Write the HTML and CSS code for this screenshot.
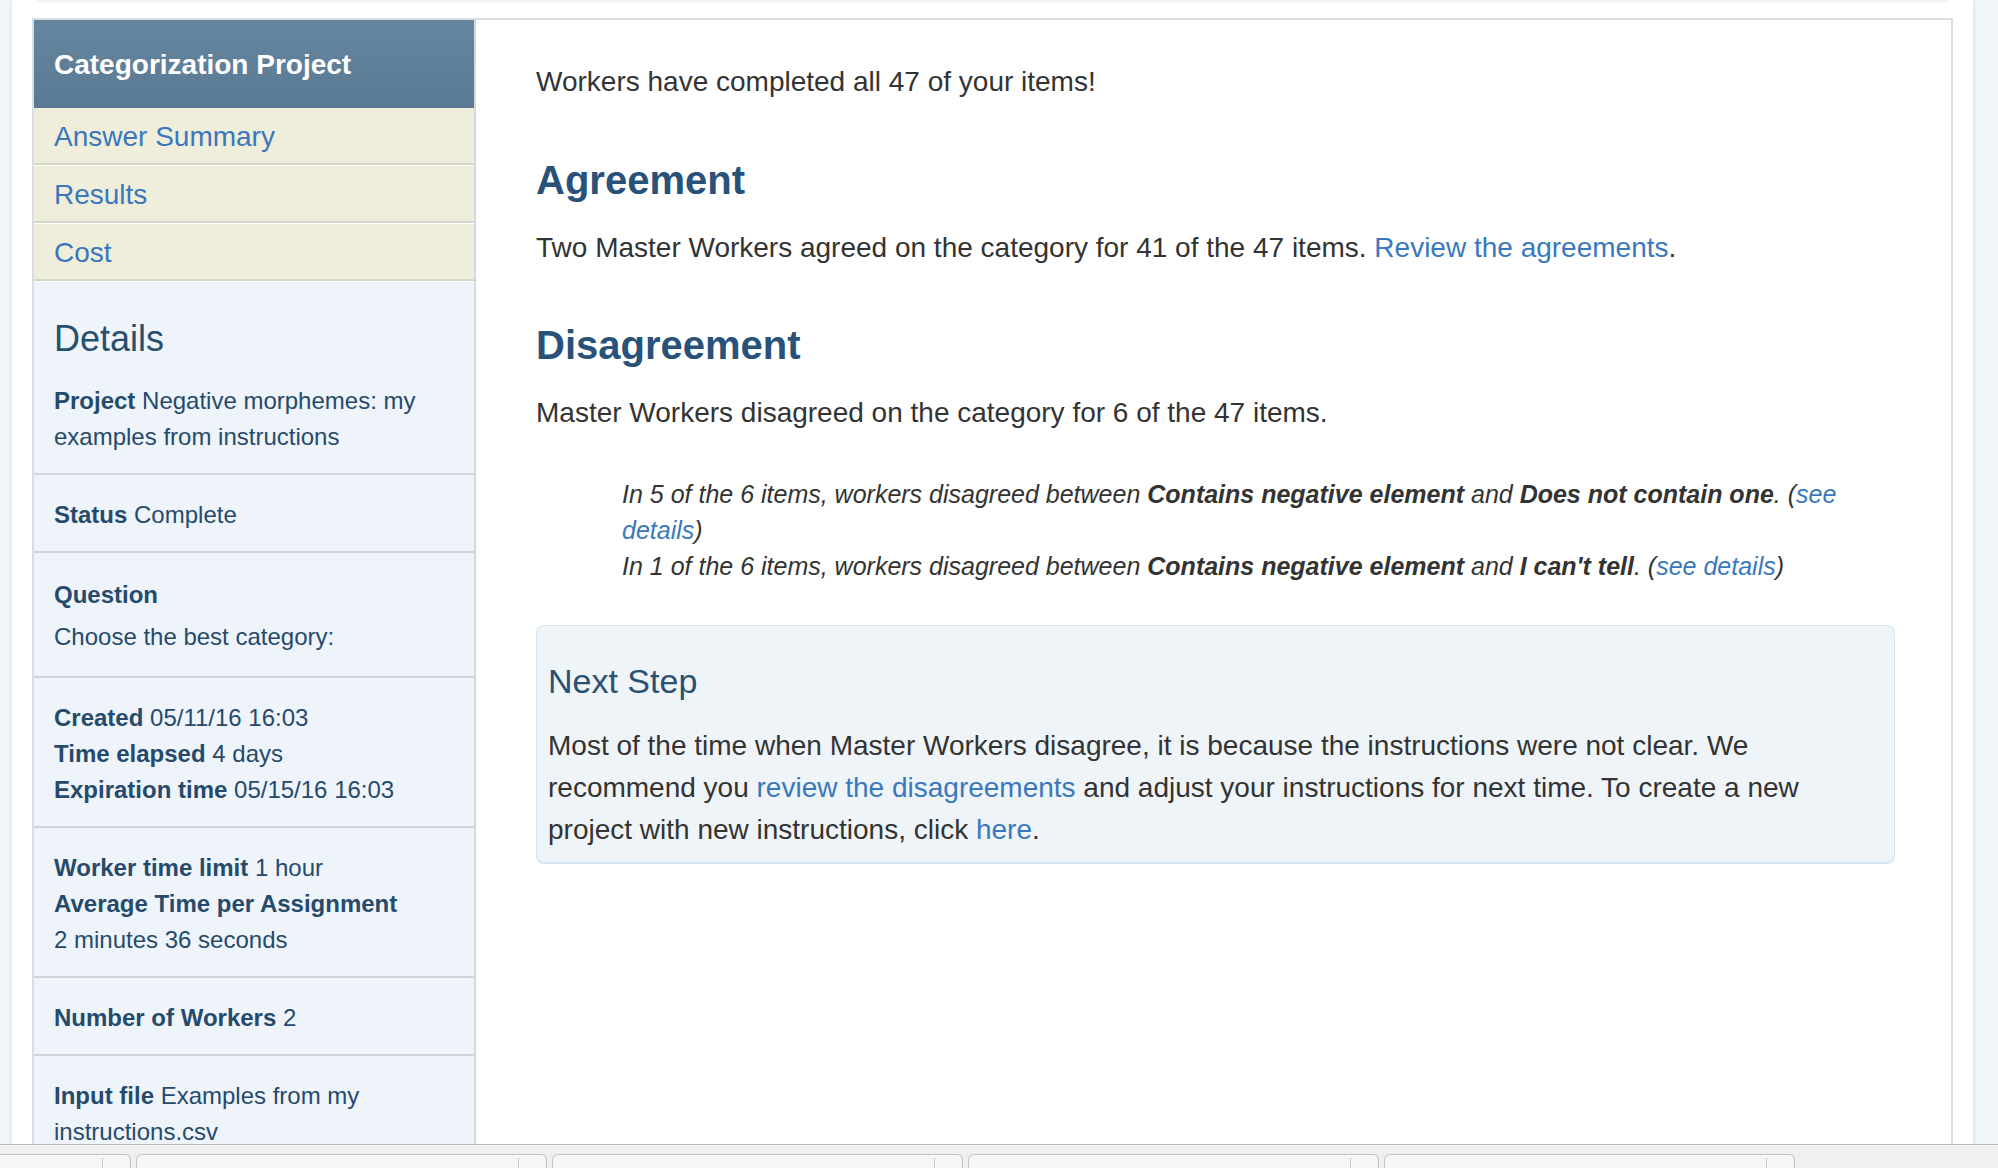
FILE: index.html
```html
<!DOCTYPE html>
<html lang="en">
<head>
<meta charset="utf-8">
<title>Categorization Project</title>
<link rel="stylesheet" href="styles.css">
</head>
<body>
<div class="page">
  <div class="topshade"></div>
  <div class="container">
    <aside class="sidebar">
      <div class="side-title">Categorization Project</div>
      <nav class="side-nav">
        <a class="nav-item first" href="#">Answer Summary</a>
        <a class="nav-item" href="#">Results</a>
        <a class="nav-item" href="#">Cost</a>
      </nav>
      <div class="details">
        <section class="d-sec d-first">
          <h2 class="d-title">Details</h2>
          <p class="d-line"><b>Project</b> Negative morphemes: my examples from instructions</p>
        </section>
        <section class="d-sec">
          <p class="d-line"><b>Status</b> Complete</p>
        </section>
        <section class="d-sec d-question">
          <p class="d-line q-label"><b>Question</b></p>
          <p class="d-line q-text">Choose the best category:</p>
        </section>
        <section class="d-sec">
          <p class="d-line"><b>Created</b> 05/11/16 16:03</p>
          <p class="d-line"><b>Time elapsed</b> 4 days</p>
          <p class="d-line"><b>Expiration time</b> 05/15/16 16:03</p>
        </section>
        <section class="d-sec">
          <p class="d-line"><b>Worker time limit</b> 1 hour</p>
          <p class="d-line"><b>Average Time per Assignment</b></p>
          <p class="d-line">2 minutes 36 seconds</p>
        </section>
        <section class="d-sec">
          <p class="d-line"><b>Number of Workers</b> 2</p>
        </section>
        <section class="d-sec">
          <p class="d-line"><b>Input file</b> Examples from my instructions.csv</p>
        </section>
      </div>
    </aside>
    <main class="main">
      <p class="m-text">Workers have completed all 47 of your items!</p>
      <h2 class="m-head">Agreement</h2>
      <p class="m-text">Two Master Workers agreed on the category for 41 of the 47 items. <a class="link" href="#">Review the agreements</a>.</p>
      <h2 class="m-head">Disagreement</h2>
      <p class="m-text">Master Workers disagreed on the category for 6 of the 47 items.</p>
      <div class="dis-list">
        <p class="dis-item">In 5 of the 6 items, workers disagreed between <b>Contains negative element</b> and <b>Does not contain one</b>. (<a class="link" href="#">see details</a>)</p>
        <p class="dis-item">In 1 of the 6 items, workers disagreed between <b>Contains negative element</b> and <b>I can't tell</b>. (<a class="link" href="#">see details</a>)</p>
      </div>
      <div class="next-box">
        <h3 class="next-title">Next Step</h3>
        <p class="next-text">Most of the time when Master Workers disagree, it is because the instructions were not clear. We recommend you <a class="link" href="#">review the disagreements</a> and adjust your instructions for next time. To create a new project with new instructions, click <a class="link" href="#">here</a>.</p>
      </div>
    </main>
  </div>
</div>
<div class="bottombar">
  <div class="tabs">
    <div class="tab"><span class="tab-line"></span></div>
    <div class="tab"><span class="tab-line"></span></div>
    <div class="tab"><span class="tab-line"></span></div>
    <div class="tab"><span class="tab-line"></span></div>
    <div class="tab"><span class="tab-line"></span></div>
  </div>
</div>
</body>
</html>
```

FILE: styles.css
```css
html {
  overflow: hidden;
}
body {
  margin: 0;
  height: 1168px;
  overflow: hidden;
  background: #f1f6f9;
  font-family: "Liberation Sans", Arial, Helvetica, sans-serif;
}
.page {
  margin-left: 12px;
  width: 1961px;
  min-height: 1168px;
  box-sizing: border-box;
  padding: 14px 20px 0;
  background: #fff;
  box-shadow: 0 0 5px rgba(0, 0, 0, 0.12);
}
.topshade {
  height: 4px;
  margin: -14px 5px 14px;
  background: linear-gradient(to bottom, #eeeeee, #ffffff);
}
.container {
  display: flex;
  align-items: stretch;
  border: 2px solid #d8dfe4;
  border-bottom: none;
  width: 1921px;
  box-sizing: border-box;
}

/* Sidebar */
.sidebar {
  width: 442px;
  flex: 0 0 442px;
  box-sizing: border-box;
  border-right: 2px solid #d2d8dc;
  background: #eef4f9;
}
.side-title {
  padding: 25px 20px 23px;
  line-height: 40px;
  font-size: 28px;
  font-weight: bold;
  color: #fff;
  background: linear-gradient(to bottom, #66859f, #5a7a93);
}
.side-nav {
  display: flex;
  flex-direction: column;
}
.nav-item {
  display: block;
  padding: 9px 20px 6px;
  line-height: 40px;
  font-size: 28px;
  color: #3a77bd;
  text-decoration: none;
  background: #efeedb;
  border-top: 1px solid #fff;
  border-bottom: 2px solid #d6d6c6;
}
.nav-item.first {
  border-top: none;
}
.details {
  color: #264a6c;
}
.d-sec {
  padding: 22px 20px 18px;
  border-bottom: 2px solid #cfd4d8;
}
.d-first {
  border-top: 1px solid #fff;
}
.d-question {
  padding-top: 24px;
  padding-bottom: 17px;
}
.d-title {
  margin: 13px 0 22px;
  font-size: 36px;
  line-height: 44px;
  font-weight: normal;
  color: #27506f;
}
.d-line {
  margin: 0;
  font-size: 24px;
  line-height: 36px;
}
.q-label {
  margin-bottom: 6px;
}
.q-text {
  margin-bottom: 4px;
}

/* Main */
.main {
  flex: 1 1 auto;
  padding: 41px 56px 0 60px;
  color: #333;
}
.m-text {
  margin: 0;
  font-size: 28px;
  line-height: 42px;
}
.m-head {
  margin: 55px 0 25px;
  font-size: 40px;
  line-height: 44px;
  font-weight: bold;
  color: #28527a;
}
.m-text + .m-head + .m-text + .m-head {
  margin-top: 54px;
}
.link {
  color: #3a78bd;
  text-decoration: none;
}
.dis-list {
  margin: 42px 0 0 86px;
}
.dis-item {
  margin: 0;
  font-size: 25px;
  line-height: 36px;
  font-style: italic;
  color: #333;
}
.next-box {
  margin-top: 41px;
  padding: 35px 11px 11px;
  border: 1px solid #d9e5ee;
  border-bottom-width: 2px;
  border-radius: 8px;
  background: #eff4f8;
}
.next-title {
  margin: 0 0 24px;
  font-size: 34px;
  line-height: 40px;
  font-weight: normal;
  color: #2a5072;
}
.next-text {
  margin: 0;
  font-size: 28px;
  line-height: 42px;
  color: #333;
}

/* Bottom bar */
.bottombar {
  position: fixed;
  left: 0;
  right: 0;
  bottom: 0;
  height: 23px;
  border-top: 1px solid #b9b9b9;
  background: #f0f0f0;
  overflow: hidden;
}
.tabs {
  display: flex;
  gap: 5px;
  margin-left: -280px;
  padding-top: 9px;
}
.tab {
  flex: 0 0 411px;
  height: 16px;
  box-sizing: border-box;
  display: flex;
  justify-content: flex-end;
  border: 1px solid #c3c3c3;
  border-bottom: none;
  border-radius: 6px 6px 0 0;
  background: #f6f6f6;
}
.tab-line {
  width: 1px;
  height: 12px;
  margin: 3px 27px 0 0;
  background: #c9c9c9;
}
```
